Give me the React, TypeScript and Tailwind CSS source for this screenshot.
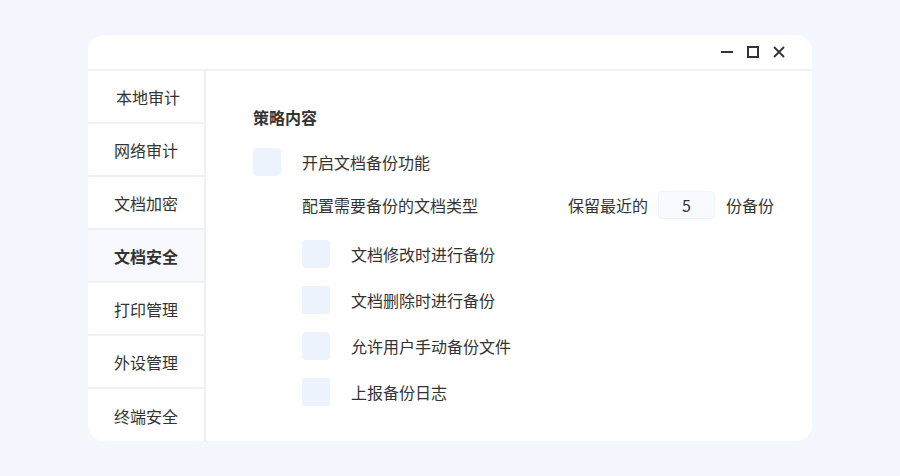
import React from 'react';

const menu = ['本地审计', '网络审计', '文档加密', '文档安全', '打印管理', '外设管理', '终端安全'];
const subOptions = ['文档修改时进行备份', '文档删除时进行备份', '允许用户手动备份文件', '上报备份日志'];

const Box: React.FC = () => <div className="w-[28px] h-[28px] rounded-[4px] bg-[#edf3fd] shrink-0" />;

export default function App() {
  return (
    <div
      className="w-[900px] h-[476px] bg-[#f4f7fd] pt-[35px] pl-[88px] text-[#333] text-base"
      style={{ fontFamily: '"Noto Sans CJK SC", "Noto Sans", sans-serif' }}
    >
      <div className="w-[724px] h-[406px] bg-white rounded-2xl flex flex-col overflow-hidden">
        {/* title bar */}
        <div className="h-[36px] border-b-2 border-[#eef2f8] flex items-center justify-end gap-[12px] pr-[26px] shrink-0">
          <svg width="14" height="14" viewBox="0 0 14 14">
            <path d="M1 7H13" stroke="#333" strokeWidth="2" />
          </svg>
          <svg width="14" height="14" viewBox="0 0 14 14">
            <rect x="2" y="2" width="10" height="10" fill="none" stroke="#333" strokeWidth="2" />
          </svg>
          <svg width="14" height="14" viewBox="0 0 14 14">
            <path d="M2 2L12 12M12 2L2 12" stroke="#333" strokeWidth="1.8" />
          </svg>
        </div>
        <div className="flex flex-1">
          {/* sidebar */}
          <div className="w-[118px] border-r-2 border-[#eef2f8] flex flex-col">
            {menu.map((m, i) => (
              <div
                key={m}
                className={`h-[53px] flex items-center justify-center ${i < menu.length - 1 ? 'border-b-2 border-[#eef2f8]' : ''} ${i === 3 ? 'bg-[#f7f9fe] font-bold' : ''} ${i === 0 ? 'pl-[4px] h-[51px]' : ''}`}
              >
                {m}
              </div>
            ))}
          </div>
          {/* content */}
          <div className="flex-1 pl-[47px] pt-[34px]">
            <div className="font-bold leading-[24px]">策略内容</div>
            <div className="flex items-center gap-[21px] mt-[19px]">
              <Box />
              <span>开启文档备份功能</span>
            </div>
            <div className="flex items-center pl-[49px] mt-[14px] h-[30px]">
              <span>配置需要备份的文档类型</span>
              <span className="ml-[90px]">保留最近的</span>
              <div className="ml-[10px] w-[57px] h-[28px] rounded-[4px] bg-[#f7faff] border border-[#edf2fb] flex items-center justify-center">
                5
              </div>
              <span className="ml-[11px]">份备份</span>
            </div>
            <div className="pl-[49px] mt-[20px] flex flex-col gap-[18px]">
              {subOptions.map((o) => (
                <div key={o} className="flex items-center gap-[21px]">
                  <Box />
                  <span>{o}</span>
                </div>
              ))}
            </div>
          </div>
        </div>
      </div>
    </div>
  );
}
